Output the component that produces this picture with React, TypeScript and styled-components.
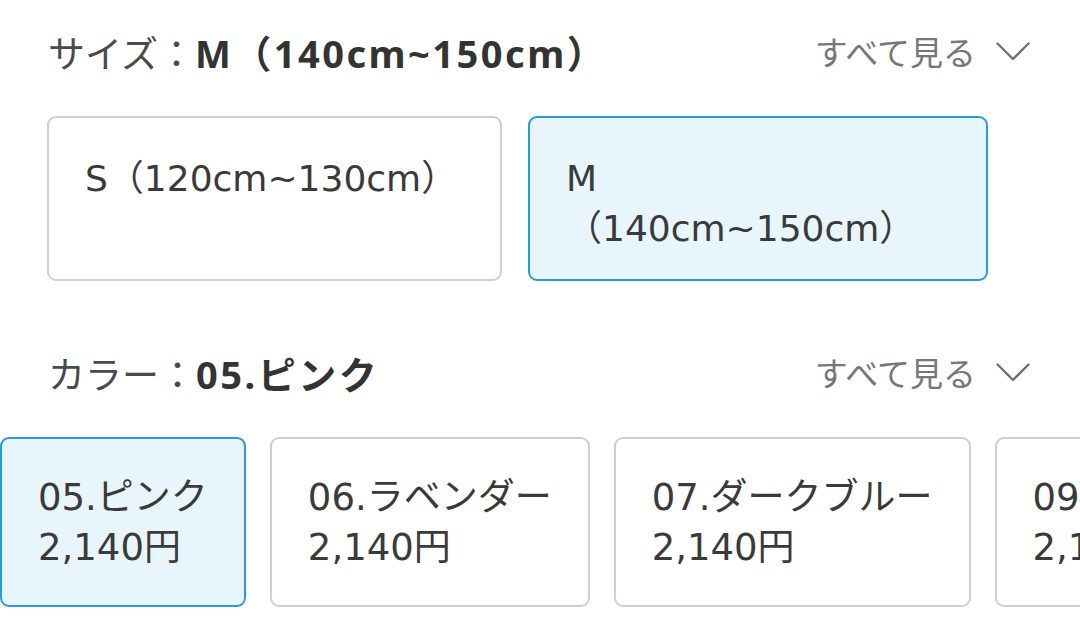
import React from 'react';
import styled, { createGlobalStyle } from 'styled-components';

const GlobalStyle = createGlobalStyle`
  html, body {
    margin: 0;
    padding: 0;
    background: #ffffff;
  }
  body {
    font-family: "DejaVu Sans", "Noto Sans CJK JP", sans-serif;
    color: #333333;
    overflow: hidden;
  }
`;

const Page = styled.div`
  width: 1080px;
  height: 636px;
  padding-top: 26px;
  box-sizing: border-box;
  overflow: hidden;
`;

const Section = styled.section<{ $gapTop?: number }>`
  margin-top: ${props => props.$gapTop ?? 0}px;
`;

const Header = styled.div`
  display: flex;
  align-items: center;
  justify-content: space-between;
  height: 50px;
  padding: 0 50px 0 48px;
`;

const Title = styled.div`
  font-family: "Noto Sans", "Noto Sans CJK JP", sans-serif;
  font-size: 37px;
  color: #4a4a4a;
  white-space: nowrap;
`;

const Selected = styled.span`
  font-size: 38px;
  font-weight: 700;
  letter-spacing: 2.5px;
  color: #333333;
`;

const SeeAll = styled.button`
  display: flex;
  align-items: center;
  gap: 20px;
  border: none;
  background: none;
  padding: 0;
  font-family: "Noto Sans CJK JP", sans-serif;
  font-size: 33px;
  color: #777777;
  cursor: pointer;
`;

const SizeGrid = styled.div`
  display: grid;
  grid-template-columns: 455px 460px;
  gap: 26px;
  margin-top: 40px;
  padding-left: 47px;
`;

const Option = styled.div<{ $active?: boolean }>`
  box-sizing: border-box;
  border: 2px solid ${props => props.$active ? '#2d9ad8' : '#cfcfcf'};
  background: ${props => props.$active ? '#e8f5fd' : '#ffffff'};
  border-radius: 9px;
  font-size: 36px;
  line-height: 50px;
  color: #3a3a3a;
`;

const SizeOption = styled(Option)`
  height: 165px;
  padding: 36px 36px 0;
`;

const ColorRow = styled.div`
  display: flex;
  gap: 24px;
  margin-top: 40px;
  overflow: hidden;
`;

const ColorOption = styled(Option)`
  flex: 0 0 auto;
  height: 170px;
  padding: 34px 36px 0 36px;
  font-size: 37px;
  white-space: nowrap;
`;

const Chevron = () => (
  <svg width="34" height="19" viewBox="0 0 34 19" fill="none">
    <path d="M1.5 1.5 L17 17 L32.5 1.5" stroke="#707070" strokeWidth="2.4" strokeLinecap="round" strokeLinejoin="round" />
  </svg>
);

const sizes = [
  { lines: ['S（120cm~130cm）'], active: false },
  { lines: ['M', '（140cm~150cm）'], active: true },
];

const colors = [
  { name: '05.ピンク', price: '2,140円', active: true },
  { name: '06.ラベンダー', price: '2,140円', active: false },
  { name: '07.ダークブルー', price: '2,140円', active: false },
  { name: '09.ネイビー', price: '2,140円', active: false },
];

const App: React.FC = () => {
  return (
    <>
      <GlobalStyle />
      <Page>
        <Section>
          <Header>
            <Title>
              サイズ：<Selected>M（140cm~150cm）</Selected>
            </Title>
            <SeeAll>
              すべて見る
              <Chevron />
            </SeeAll>
          </Header>
          <SizeGrid>
            {sizes.map((s, i) => (
              <SizeOption key={i} $active={s.active}>
                {s.lines.map((l, j) => (
                  <div key={j}>{l}</div>
                ))}
              </SizeOption>
            ))}
          </SizeGrid>
        </Section>

        <Section $gapTop={66}>
          <Header>
            <Title>
              カラー：<Selected>05.ピンク</Selected>
            </Title>
            <SeeAll>
              すべて見る
              <Chevron />
            </SeeAll>
          </Header>
          <ColorRow>
            {colors.map(c => (
              <ColorOption key={c.name} $active={c.active}>
                <div>{c.name}</div>
                <div>{c.price}</div>
              </ColorOption>
            ))}
          </ColorRow>
        </Section>
      </Page>
    </>
  );
};

export default App;
